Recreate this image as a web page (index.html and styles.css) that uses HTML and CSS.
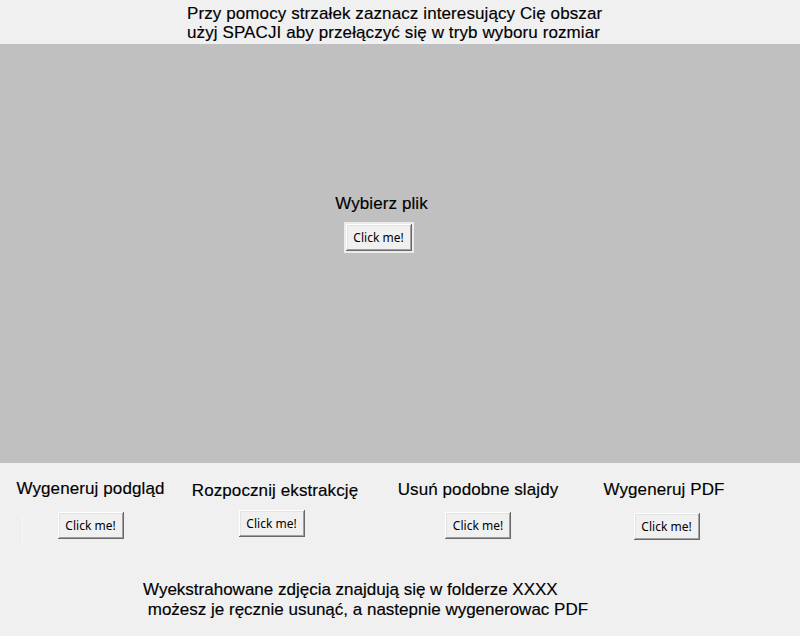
FILE: index.html
```html
<!DOCTYPE html>
<html lang="pl">
<head>
<meta charset="utf-8">
<link rel="stylesheet" href="styles.css">
</head>
<body>
<header class="hint">
  <div>Przy pomocy strzałek zaznacz interesujący Cię obszar</div>
  <div>użyj SPACJI aby przełączyć się w tryb wyboru rozmiar</div>
</header>
<main class="canvas">
  <div class="picker">
    <div class="label">Wybierz plik</div>
    <div class="focus"><button class="btn">Click me!</button></div>
  </div>
</main>
<section class="actions">
  <span class="sep"></span>
  <div class="col c1">
    <div class="label">Wygeneruj podgląd</div>
    <button class="btn">Click me!</button>
  </div>
  <div class="col c2">
    <div class="label">Rozpocznij ekstrakcję</div>
    <button class="btn">Click me!</button>
  </div>
  <div class="col c3">
    <div class="label">Usuń podobne slajdy</div>
    <button class="btn">Click me!</button>
  </div>
  <div class="col c4">
    <div class="label">Wygeneruj PDF</div>
    <button class="btn">Click me!</button>
  </div>
</section>
<footer class="info">
  <div>Wyekstrahowane zdjęcia znajdują się w folderze XXXX</div>
  <div>&nbsp;możesz je ręcznie usunąć, a nastepnie wygenerowac PDF</div>
</footer>
</body>
</html>
```

FILE: styles.css
```css
html, body {
  margin: 0;
  padding: 0;
}
body {
  width: 800px;
  height: 636px;
  overflow: hidden;
  background: #f0f0f0;
  font-family: "Liberation Sans", Arial, sans-serif;
  font-size: 17px;
  letter-spacing: 0.1px;
  color: #000;
  -webkit-text-stroke: 0.15px #000;
}
.hint {
  height: 44px;
  box-sizing: border-box;
  padding: 4px 0 0 187px;
  line-height: 19px;
  white-space: nowrap;
}
.canvas {
  height: 419px;
  background: #c0c0c0;
  display: flex;
  justify-content: center;
  box-sizing: border-box;
  padding-top: 150px;
}
.picker {
  display: flex;
  flex-direction: column;
  align-items: center;
  margin-right: 43px;
}
.label {
  line-height: 19px;
  white-space: nowrap;
}
.picker .label {
  margin-bottom: 9px;
  margin-left: 6px;
}
.focus {
  background: #ececec;
  padding: 2px;
}
.btn {
  display: block;
  width: 66px;
  height: 27px;
  padding: 0;
  margin: 0;
  border: none;
  background: #f0f0f0;
  font-family: "Noto Sans", "Open Sans", sans-serif;
  font-size: 12px;
  letter-spacing: 0;
  -webkit-text-stroke: 0;
  color: #000;
  box-shadow: inset -1px -1px 0 #696969, inset 1px 1px 0 #ffffff, inset -2px -2px 0 #a0a0a0, inset 2px 2px 0 #e3e3e3;
}
.actions {
  position: relative;
  display: grid;
  grid-template-columns: 181px 188px 218px 154px;
  padding-top: 16px;
  height: 99px;
  box-sizing: border-box;
}
.sep {
  position: absolute;
  left: 22px;
  top: 54px;
  width: 1px;
  height: 29px;
  background: #f8f8f8;
}
.col {
  display: flex;
  flex-direction: column;
  align-items: center;
}
.col .label {
  margin-bottom: 14px;
}
.c2 .label { margin-top: 2px; margin-bottom: 10px; }
.c2 .btn { margin-right: 7px; }
.c3 .label { margin-top: 1px; margin-bottom: 13px; }
.c4 .label { margin-top: 1px; margin-bottom: 14px; }
.c4 .btn { margin-left: 5px; }
.info {
  line-height: 20px;
  padding: 18px 0 0 143px;
  white-space: nowrap;
  letter-spacing: 0;
}
```
